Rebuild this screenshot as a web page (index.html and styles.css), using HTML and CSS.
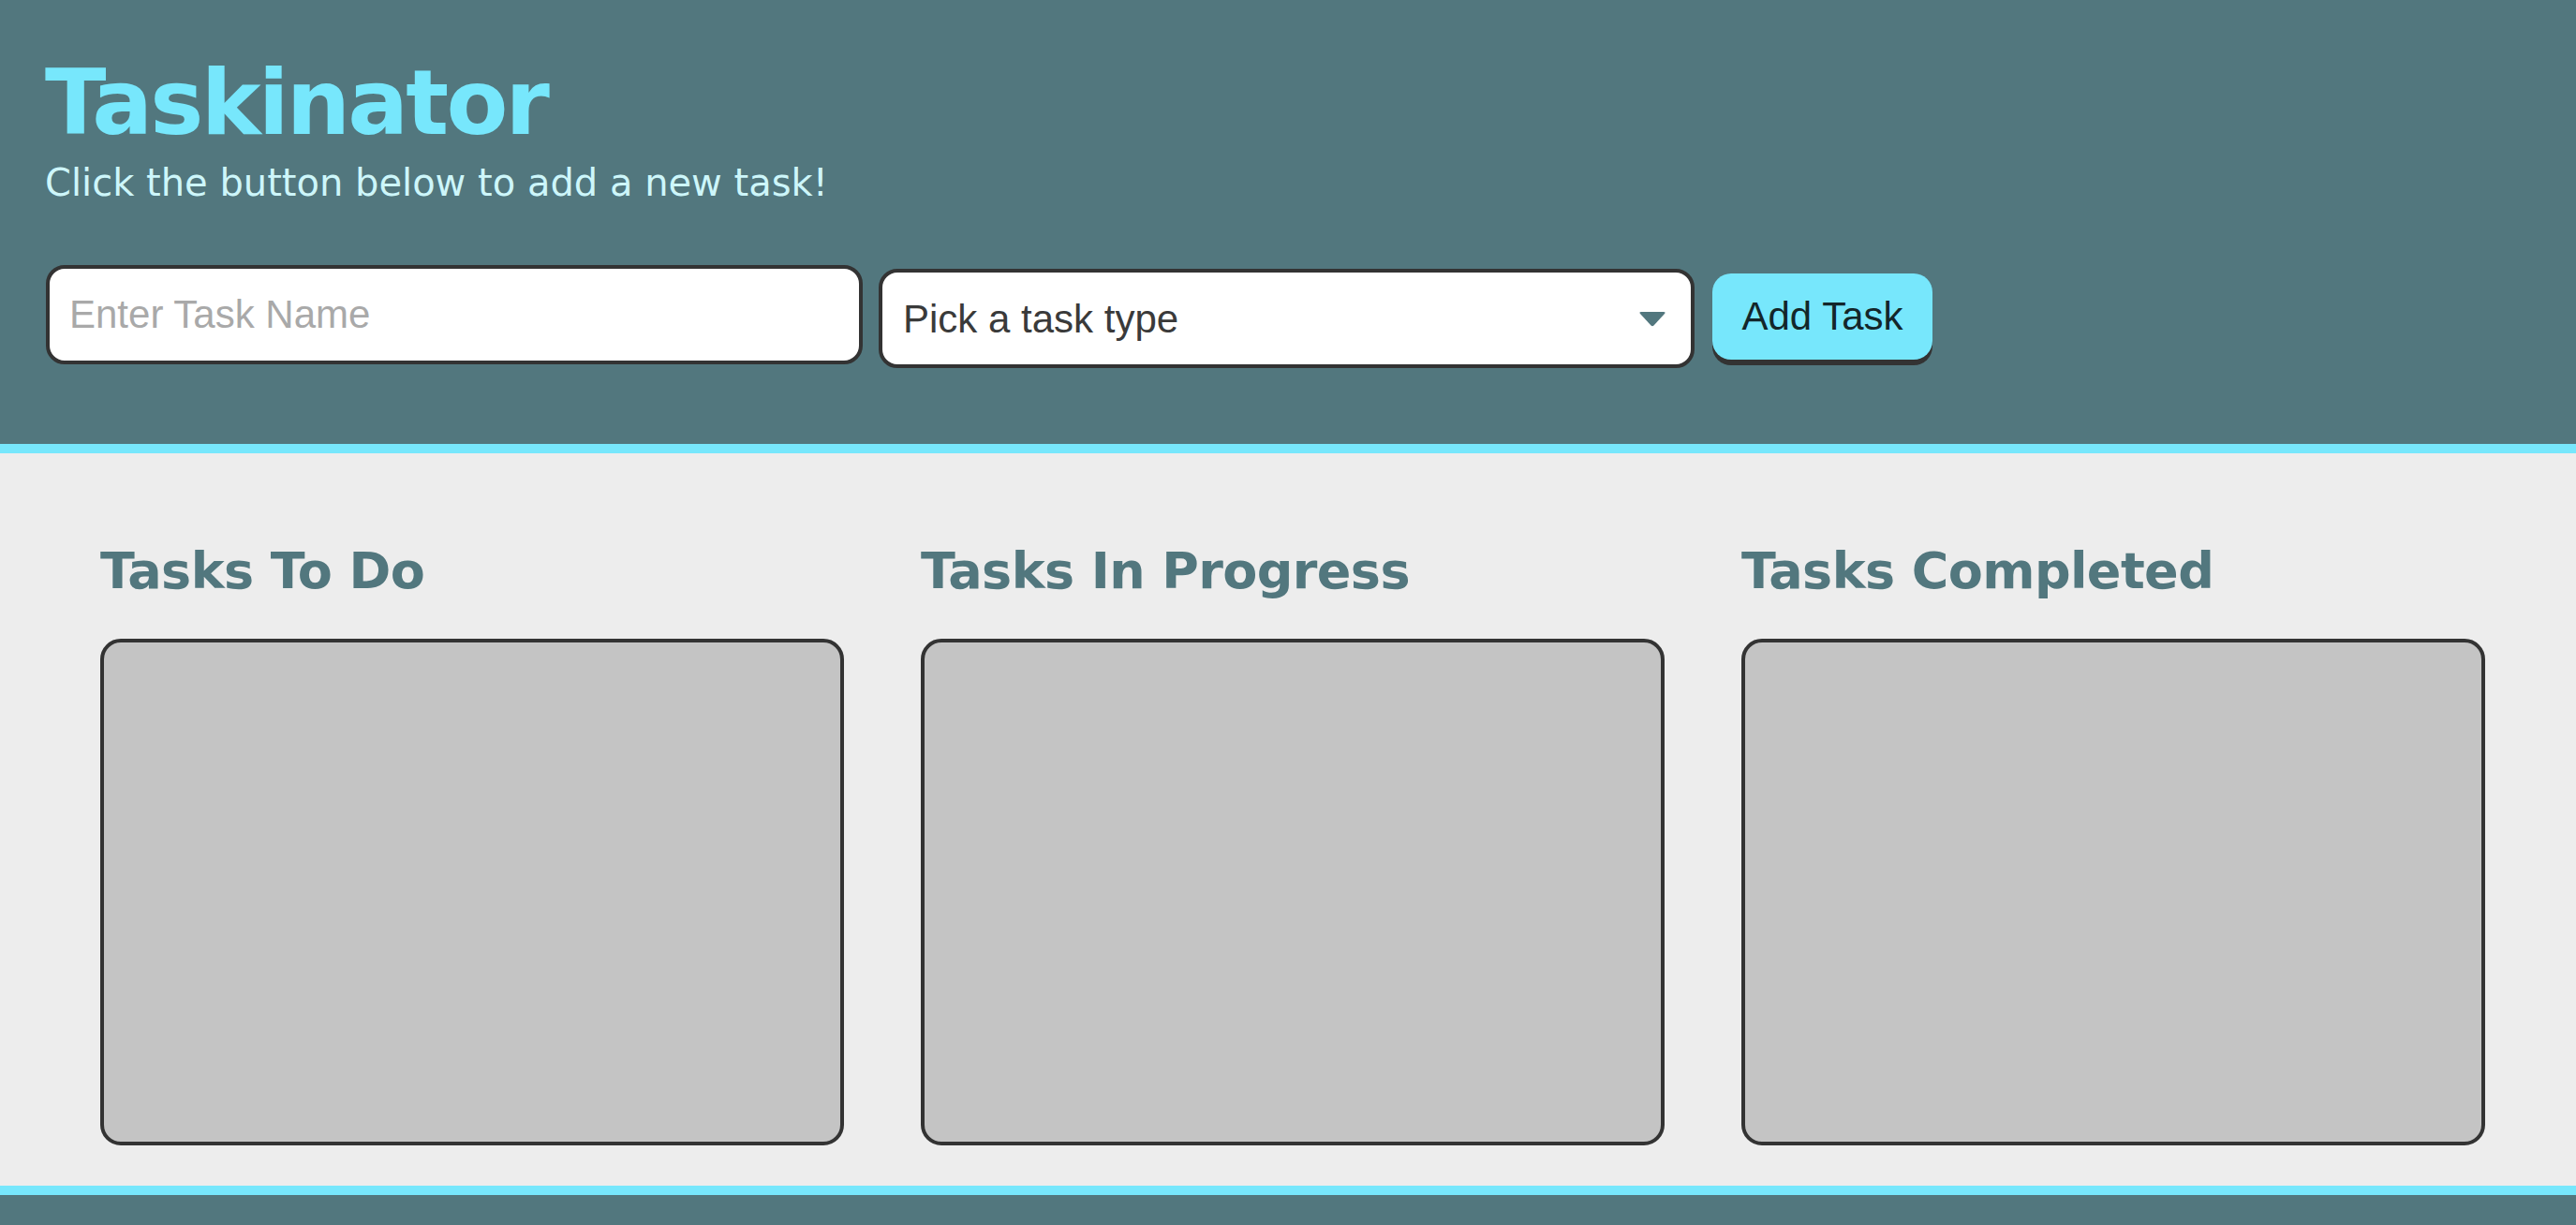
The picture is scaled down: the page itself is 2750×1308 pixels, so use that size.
FILE: index.html
```html
<!DOCTYPE html>
<html lang="en">
<head>
<meta charset="utf-8">
<title>Taskinator</title>
<link rel="stylesheet" href="styles.css">
</head>
<body>
<header class="header">
  <h1 class="page-title">Taskinator</h1>
  <p class="subtitle">Click the button below to add a new task!</p>
  <form class="task-form">
    <input class="text-input" type="text" placeholder="Enter Task Name">
    <div class="select-wrap">
      <select class="select-input">
        <option>Pick a task type</option>
        <option>Web</option>
        <option>Mobile</option>
        <option>Print</option>
      </select>
      <svg class="select-arrow" width="30" height="17" viewBox="0 0 30 17"><path d="M3 1 H27 Q29.5 1 28 3 L16.5 15.5 Q15 17 13.5 15.5 L2 3 Q0.5 1 3 1 Z" fill="#52777e"/></svg>
    </div>
    <button class="btn" type="button">Add Task</button>
  </form>
</header>
<main class="page-content">
  <section class="task-list-wrapper">
    <h2 class="list-title">Tasks To Do</h2>
    <ul class="task-list"></ul>
  </section>
  <section class="task-list-wrapper">
    <h2 class="list-title">Tasks In Progress</h2>
    <ul class="task-list"></ul>
  </section>
  <section class="task-list-wrapper">
    <h2 class="list-title">Tasks Completed</h2>
    <ul class="task-list"></ul>
  </section>
</main>
<footer class="footer"></footer>
</body>
</html>
```
FILE: styles.css
```css
* {
  box-sizing: border-box;
}

body {
  margin: 0;
  background-color: #ededed;
  font-family: "DejaVu Sans", Verdana, sans-serif;
}

.header {
  background-color: #52777e;
  border-bottom: 10px solid #77e7fc;
  padding: 62px 48px 81px 48px;
}

.page-title {
  margin: 0;
  font-size: 96px;
  line-height: 96px;
  font-weight: bold;
  letter-spacing: -2.8px;
  color: #77e7fc;
}

.subtitle {
  margin: 13px 0 0 0;
  font-size: 40px;
  line-height: 48px;
  color: #cdf6fa;
}

.task-form {
  display: flex;
  align-items: flex-start;
  margin-top: 64px;
}

.text-input {
  width: 872px;
  height: 106px;
  margin-left: 1px;
  border: 4px solid #333;
  border-radius: 20px;
  background: #fff;
  padding: 0 21px;
  font-family: "Liberation Sans", Arial, sans-serif;
  font-size: 42px;
  color: #333;
  outline: none;
}

.text-input::placeholder {
  color: #a9a9a9;
}

.select-wrap {
  position: relative;
  margin-left: 17px;
  margin-top: 4px;
}

.select-input {
  display: block;
  width: 871px;
  height: 106px;
  border: 4px solid #333;
  border-radius: 20px;
  background: #fff;
  padding: 0 22px;
  font-family: "Liberation Sans", Arial, sans-serif;
  font-size: 42px;
  color: #3a3a3a;
  -webkit-appearance: none;
  appearance: none;
  outline: none;
}

.select-arrow {
  position: absolute;
  right: 30px;
  top: 45px;
  pointer-events: none;
}

.btn {
  margin-left: 19px;
  margin-top: 9px;
  width: 235px;
  height: 92px;
  border: none;
  border-radius: 20px;
  background-color: #77e7fc;
  box-shadow: 0 6px 0 #333;
  font-family: "Liberation Sans", Arial, sans-serif;
  font-size: 42px;
  color: #13262a;
  padding: 0;
  cursor: pointer;
}

.page-content {
  display: flex;
  gap: 82px;
  padding: 94px 97px 43px 107px;
}

.task-list-wrapper {
  flex: 1;
}

.list-title {
  margin: 0 0 40px 0;
  font-size: 54px;
  line-height: 64px;
  font-weight: bold;
  letter-spacing: -0.6px;
  color: #52777e;
}

.task-list {
  margin: 0;
  padding: 0;
  list-style: none;
  height: 541px;
  background-color: #c4c4c4;
  border: 4px solid #333;
  border-radius: 22px;
}

.footer {
  background-color: #52777e;
  border-top: 10px solid #77e7fc;
  height: 120px;
}
```
